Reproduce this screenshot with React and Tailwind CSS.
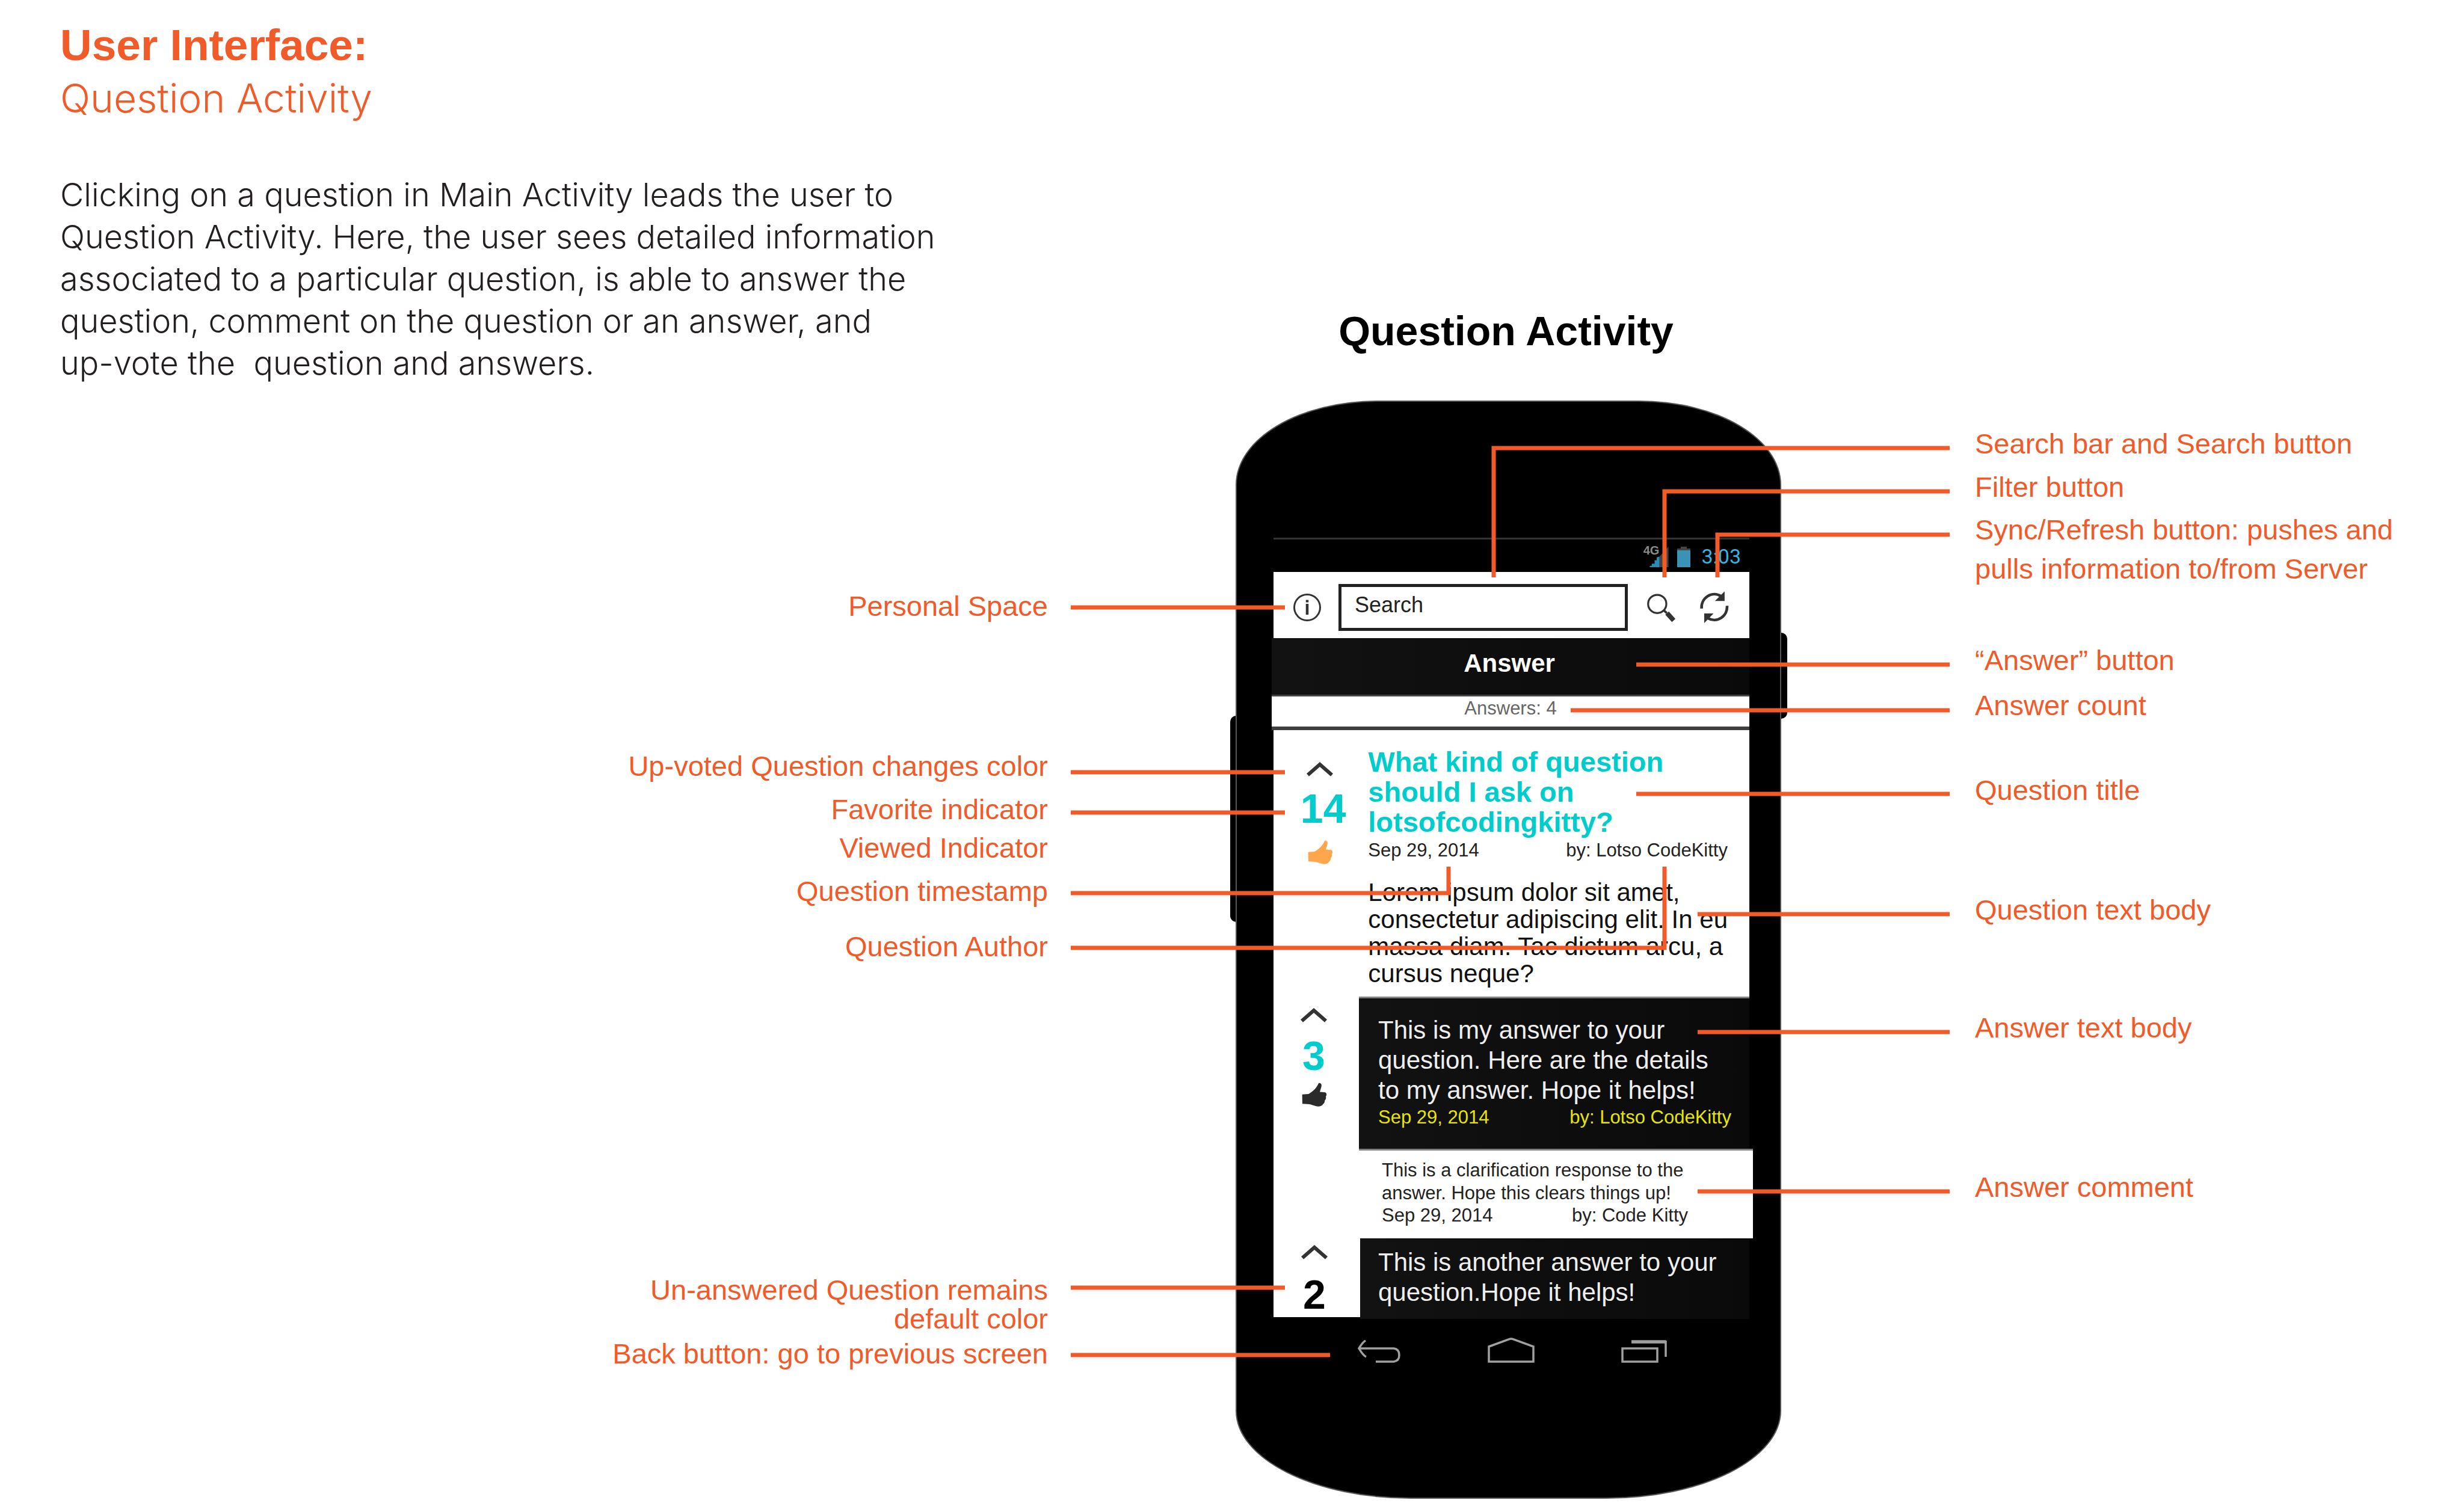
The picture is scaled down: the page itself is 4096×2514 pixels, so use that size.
import React from "react";

const sans = "font-['Liberation_Sans',Arial,sans-serif]";

/* ---------- icons ---------- */

function InfoIcon() {
  return (
    <svg viewBox="0 0 48 48" className="size-12" fill="none" stroke="#333" aria-hidden="true">
      <circle cx="24" cy="24" r="21.5" strokeWidth="3" />
      <path d="M24 18v18" strokeWidth="4.5" />
      <path d="M24 11.500v4" strokeWidth="4.5" />
    </svg>
  );
}

function MagnifierIcon() {
  return (
    <svg viewBox="0 0 165 170" className="h-[50px] w-12" fill="none" stroke="#333" aria-hidden="true">
      <circle cx="58" cy="65" r="52" strokeWidth="11" />
      <path d="M97 103l16 14" strokeWidth="13" />
      <path d="M114 117l38 42" strokeWidth="27" />
    </svg>
  );
}

function SyncIcon() {
  return (
    <svg viewBox="10 0 175 195" className="h-14 w-[51px]" fill="none" stroke="#333" aria-hidden="true">
      <path d="M25 104A74 76 0 0 1 137 32" strokeWidth="16" />
      <path d="M158 4V60H102Z" fill="#333" stroke="none" />
      <path d="M172 88A74 76 0 0 1 62 160" strokeWidth="16" />
      <path d="M40 188V132H94Z" fill="#333" stroke="none" />
    </svg>
  );
}

function Chevron() {
  return (
    <svg viewBox="0 0 44 24" className="h-6 w-11" fill="none" stroke="#333" strokeWidth="6" aria-hidden="true">
      <path d="M2 21.500L22 4l20 17.500" />
    </svg>
  );
}

function Thumb({ className }) {
  return (
    <svg viewBox="0 0 150 150" className={className} fill="currentColor" aria-hidden="true">
      <path d="M9 71 45 68C64 58 84 42 96 20L103 6C114 4 121 12 118 26L109 56 140 59C149 64 149 76 143 82 146 90 143 100 137 105 138 114 133 121 127 126 119 139 100 141 85 136L52 126 10 124Z" />
    </svg>
  );
}

function SignalIcon() {
  return (
    <svg viewBox="0 0 108 118" className="h-[34px] w-8" aria-hidden="true">
      <path d="M108 0V118H56V57Z" fill="#444" />
      <path d="M56 57V118H0V110H12V98H28V78H40V62Z" fill="#2a8db5" />
    </svg>
  );
}

function BatteryIcon() {
  return (
    <svg viewBox="0 0 22 34" className="h-[34px] w-[22px]" aria-hidden="true">
      <path d="M6 0h10v3h6v4H0V3h6z" fill="#444" />
      <path d="M0 6h22v28H0z" fill="#3a93b5" />
    </svg>
  );
}

function BackIcon() {
  return (
    <svg viewBox="0 0 73 38" className="h-[38px] w-[73px]" fill="none" stroke="#a0a0a0" strokeWidth="3.500" aria-hidden="true">
      <path d="M14 1C10 3 6 9 3 14 6 19 10 26 15 28" />
      <path d="M2 14H61C68 15 70 20 70 25 70 31 68 35 61 36H31" />
    </svg>
  );
}

function HomeIcon() {
  return (
    <svg viewBox="0 0 78 42" className="h-[42px] w-[78px]" fill="none" stroke="#a0a0a0" strokeWidth="3.500" aria-hidden="true">
      <path d="M2 15 35 3Q39 1 43 3L76 15V40H2Z" />
    </svg>
  );
}

function RecentsIcon() {
  return (
    <svg viewBox="0 0 77 38" className="h-[38px] w-[77px]" fill="none" stroke="#a0a0a0" strokeWidth="3.500" aria-hidden="true">
      <path d="M2 14H60V36H2Z" />
      <path d="M17 3H74" strokeWidth="5.500" />
      <path d="M74 1V28" />
    </svg>
  );
}

/* ---------- phone ---------- */

function Byline({ date, author, className = "" }) {
  return (
    <p className={`flex justify-between text-[31px] leading-9 ${className}`}>
      <time>{date}</time>
      <span>{author}</span>
    </p>
  );
}

function Lines({ lines }) {
  return lines.map((line) => (
    <span key={line} className="block whitespace-nowrap">
      {line}
    </span>
  ));
}

function StatusBar() {
  return (
    <div className="flex h-[57px] justify-end border-t-[3px] border-[#333] pt-2 pr-[14px]">
      <span className="text-[20px] leading-5 font-bold text-[#8a8a8a]">4G</span>
      <span className="-ml-4 pt-1">
        <SignalIcon />
      </span>
      <span className="ml-[14px] pt-1">
        <BatteryIcon />
      </span>
      <time className="ml-[18px] font-['Roboto',sans-serif] text-[34px] leading-[40px] text-[#33b5e5]">3:03</time>
    </div>
  );
}

function Toolbar() {
  return (
    <form className="flex h-[110px] items-center bg-white pt-2 pr-[33px] pl-[32px]" onSubmit={(e) => e.preventDefault()}>
      <button type="button" aria-label="Personal space">
        <InfoIcon />
      </button>
      <input
        type="text"
        aria-label="Search"
        defaultValue="Search"
        className="mr-8 ml-7 h-[78px] min-w-0 flex-1 border-[5px] border-[#222] bg-white pr-6 pb-2 pl-[22px] text-[36px] text-[#222] outline-none"
      />
      <button type="button" aria-label="Filter">
        <MagnifierIcon />
      </button>
      <button type="button" aria-label="Refresh" className="ml-[38px]">
        <SyncIcon />
      </button>
    </form>
  );
}

function Question() {
  return (
    <article className="flex">
      <div className="flex w-[158px] flex-col items-center pt-[53px] pr-1">
        <button type="button" aria-label="Up-vote question">
          <Chevron />
        </button>
        <strong className="mt-[19px] pl-3 text-[68px] leading-[68px] text-[#00cccc]">14</strong>
        <Thumb className="mt-[18px] size-11 text-[#ffa64d]" />
      </div>
      <div className="flex-1 pt-7 pr-9 pb-4">
        <h3 className="text-[47px] leading-[50px] font-bold text-[#00cccc]">
          <Lines lines={["What kind of question", "should I ask on", "lotsofcodingkitty?"]} />
        </h3>
        <Byline date="Sep 29, 2014" author="by: Lotso CodeKitty" className="mt-1 text-[#222]" />
        <p className="mt-[29px] text-[42px] leading-[45px] text-[#111]">
          <Lines
            lines={[
              "Lorem ipsum dolor sit amet,",
              "consectetur adipiscing elit. In eu",
              "massa diam. Tac dictum arcu, a",
              "cursus neque?",
            ]}
          />
        </p>
      </div>
    </article>
  );
}

function AnswerOne() {
  return (
    <article className="flex">
      <div className="flex w-[142px] flex-col items-center pt-[19px] pr-2">
        <button type="button" aria-label="Up-vote answer">
          <Chevron />
        </button>
        <strong className="mt-[21px] text-[68px] leading-[68px] text-[#00cccc]">3</strong>
        <Thumb className="mt-[10px] size-11 text-[#2b2b2b]" />
      </div>
      <div className="flex-1">
        <div className="border-t-[3px] border-[#808080] bg-linear-to-r from-[#121212] to-[#0a0a0a] pt-7 pr-[30px] pb-[34px] pl-8 text-[#eee]">
          <p className="text-[42px] leading-[50px]">
            <Lines lines={["This is my answer to your", "question. Here are the details", "to my answer. Hope it helps!"]} />
          </p>
          <Byline date="Sep 29, 2014" author="by: Lotso CodeKitty" className="mt-[2px] text-[#e6e600]" />
        </div>
        <div className="-mr-[6px] border-t-[3px] border-[#808080] bg-white pt-[14px] pr-[108px] pb-5 pl-[38px] text-[#222]">
          <p className="text-[31px] leading-[38px]">
            <Lines lines={["This is a clarification response to the", "answer. Hope this clears things up!"]} />
          </p>
          <Byline date="Sep 29, 2014" author="by: Code Kitty" />
        </div>
      </div>
    </article>
  );
}

function AnswerTwo() {
  return (
    <article className="flex">
      <div className="mb-[3px] flex w-[144px] flex-col items-center bg-white pt-[11px] pr-2">
        <button type="button" aria-label="Up-vote answer">
          <Chevron />
        </button>
        <strong className="mt-6 text-[68px] leading-[68px] text-black">2</strong>
      </div>
      <p className="flex-1 bg-linear-to-r from-[#121212] to-[#0a0a0a] pt-[15px] pb-[19px] pl-[30px] text-[42px] leading-[50px] text-[#eee]">
        <Lines lines={["This is another answer to your", "question.Hope it helps!"]} />
      </p>
    </article>
  );
}

function Phone() {
  return (
    <div className="relative">
      <div className="absolute top-[524px] -left-[9px] h-[343px] w-6 rounded-[10px] bg-black" />
      <div className="absolute top-[386px] -right-[10px] h-[143px] w-6 rounded-[10px] bg-black" />
      <div className="relative rounded-t-[236px_140px] rounded-b-[292px_146px] border-2 border-[#555] bg-black pt-[226px] pr-[51px] pb-[224px] pl-[61px]">
        <StatusBar />
        <Toolbar />
        <button
          type="button"
          className="-ml-[3px] flex h-[97px] w-[calc(100%+3px)] items-center justify-center border-b-[3px] border-[#444] bg-linear-to-r from-[#121212] to-[#0a0a0a] pr-1 pb-3 text-[42px] font-bold text-white"
        >
          Answer
        </button>
        <p className="-ml-[3px] flex h-14 items-center justify-center border-b-[6px] border-[#404040] bg-white pb-[10px] text-[31px] text-[#666]">
          Answers: 4
        </p>
        <div className="bg-white">
          <Question />
          <AnswerOne />
        </div>
        <AnswerTwo />
        <nav className="flex items-end pt-[31px] pl-[139px]">
          <button type="button" aria-label="Back">
            <BackIcon />
          </button>
          <button type="button" aria-label="Home" className="ml-36">
            <HomeIcon />
          </button>
          <button type="button" aria-label="Recent apps" className="ml-36">
            <RecentsIcon />
          </button>
        </nav>
      </div>
    </div>
  );
}

/* ---------- callouts ---------- */

const leaders = [
  "M3241 745H2483V960",
  "M3241 817H2767V960",
  "M3241 889H2855V960",
  "M3241 1105H2720",
  "M3241 1181H2611",
  "M3241 1320H2720",
  "M3241 1520H2822",
  "M3241 1716H2822",
  "M3241 1981H2822",
  "M1780 1010H2136",
  "M1780 1284H2136",
  "M1780 1351H2136",
  "M1780 1485H2408V1441",
  "M1780 1576H2767V1441",
  "M1780 2141H2136",
  "M1780 2253H2211",
];

function Leaders() {
  return (
    <svg
      viewBox="1742 0 1538 2514"
      className="pointer-events-none absolute top-0 left-0 h-[2514px] w-[1538px]"
      fill="none"
      stroke="#f15a29"
      strokeWidth="7"
      aria-hidden="true"
    >
      {leaders.map((d) => (
        <path key={d} d={d} />
      ))}
    </svg>
  );
}

export default function App() {
  return (
    <main className={`flex min-h-screen bg-white text-[#f15a29] ${sans}`}>
      <section className="flex-1 pt-[31px] pl-[100px]">
        <h1 className="text-[73px] leading-[88px] font-bold">User Interface:</h1>
        <h2 className="font-['Inter',sans-serif] text-[66px] leading-[88px] font-light">Question Activity</h2>
        <p className="mt-[82px] font-['Inter',sans-serif] text-[54px] leading-[70px] font-light text-[#231f20]">
          <Lines
            lines={[
              "Clicking on a question in Main Activity leads the user to",
              "Question Activity. Here, the user sees detailed information",
              "associated to a particular question, is able to answer the",
              "question, comment on the question or an answer, and",
              "up-vote the \u00a0question and answers.",
            ]}
          />
        </p>
        <ul className="mt-[345px] text-right text-[47px] leading-[48px] whitespace-nowrap">
          <li>Personal Space</li>
          <li className="mt-[218px]">Up-voted Question changes color</li>
          <li className="mt-6">Favorite indicator</li>
          <li className="mt-4">Viewed Indicator</li>
          <li className="mt-6">Question timestamp</li>
          <li className="mt-11">Question Author</li>
          <li className="mt-[523px]">
            Un-answered Question remains
            <br />
            default color
          </li>
          <li className="mt-[10px]">Back button: go to previous screen</li>
        </ul>
      </section>

      <section className="relative w-[1538px] shrink-0 pt-[510px] pr-[319px] pl-[312px]">
        <h2 className="pr-2 text-center text-[68px] leading-[80px] font-bold text-black">Question Activity</h2>
        <div className="mt-[76px]">
          <Phone />
        </div>
        <Leaders />
      </section>

      <ul className="w-[816px] shrink-0 pt-[714px] pl-[3px] text-[47px] leading-[48px] whitespace-nowrap">
        <li>Search bar and Search button</li>
        <li className="mt-6">Filter button</li>
        <li className="mt-[14px] leading-[65px]">
          Sync/Refresh button: pushes and
          <br />
          pulls information to/from Server
        </li>
        <li className="mt-24">“Answer” button</li>
        <li className="mt-[27px]">Answer count</li>
        <li className="mt-[93px]">Question title</li>
        <li className="mt-[151px]">Question text body</li>
        <li className="mt-[148px]">Answer text body</li>
        <li className="mt-[217px]">Answer comment</li>
      </ul>
    </main>
  );
}
